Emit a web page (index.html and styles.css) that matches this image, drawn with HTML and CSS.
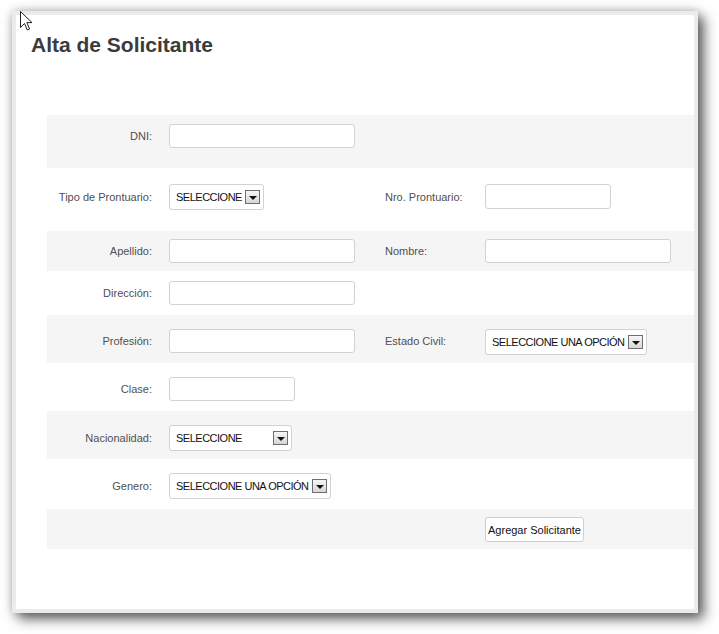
FILE: index.html
```html
<!DOCTYPE html>
<html lang="es">
<head>
<meta charset="utf-8">
<title>Alta de Solicitante</title>
<link rel="stylesheet" href="styles.css">
</head>
<body>
<div class="window">
  <h1 class="title">Alta de Solicitante</h1>
  <form class="form">
    <div class="row alt first">
      <label class="lbl">DNI:</label>
      <div class="field"><input class="inp w-lg" type="text"></div>
    </div>
    <div class="row tall">
      <label class="lbl sel-h">Tipo de Prontuario:</label>
      <div class="field"><div class="select w-95"><span class="sel-text">SELECCIONE</span><span class="arrow"></span></div></div>
      <label class="lbl2 sel-h">Nro. Prontuario:</label>
      <div class="field"><input class="inp w-sm h25" type="text"></div>
    </div>
    <div class="row alt short">
      <label class="lbl">Apellido:</label>
      <div class="field"><input class="inp w-lg" type="text"></div>
      <label class="lbl2">Nombre:</label>
      <div class="field"><input class="inp w-lg" type="text"></div>
    </div>
    <div class="row mid">
      <label class="lbl">Dirección:</label>
      <div class="field"><input class="inp w-lg" type="text"></div>
    </div>
    <div class="row alt">
      <label class="lbl">Profesión:</label>
      <div class="field"><input class="inp w-lg" type="text"></div>
      <label class="lbl2">Estado Civil:</label>
      <div class="field"><div class="select w-162"><span class="sel-text">SELECCIONE UNA OPCIÓN</span><span class="arrow"></span></div></div>
    </div>
    <div class="row">
      <label class="lbl">Clase:</label>
      <div class="field"><input class="inp w-sm" type="text"></div>
    </div>
    <div class="row alt">
      <label class="lbl sel-h">Nacionalidad:</label>
      <div class="field"><div class="select w-123"><span class="sel-text">SELECCIONE</span><span class="arrow"></span></div></div>
    </div>
    <div class="row wide">
      <label class="lbl sel-h">Genero:</label>
      <div class="field"><div class="select w-162"><span class="sel-text">SELECCIONE UNA OPCIÓN</span><span class="arrow"></span></div></div>
    </div>
    <div class="row alt short">
      <span class="lbl"></span>
      <span class="field"></span>
      <span class="lbl2"></span>
      <div class="field"><button class="btn" type="button">Agregar Solicitante</button></div>
    </div>
  </form>
</div>
<svg class="cursor" width="13" height="21" viewBox="0 0 13 21" aria-hidden="true">
  <path d="M0.5 0.5 L0.5 16.5 L4.5 12.5 L7.3 19 L9.6 18 L6.9 11.6 L12 11.6 Z" fill="#fff" stroke="#222" stroke-width="1" stroke-linejoin="miter"/>
</svg>
</body>
</html>
```

FILE: styles.css
```css
html, body {
  margin: 0;
  padding: 0;
  background: #ffffff;
}

body {
  position: relative;
  width: 719px;
  height: 634px;
  overflow: hidden;
  font-family: "Liberation Sans", Arial, sans-serif;
}

.window {
  box-sizing: border-box;
  margin: 11px 0 0 12px;
  width: 686px;
  height: 602px;
  background: #ffffff;
  border: 4px solid #ebebeb;
  box-shadow: 6px 6px 12px rgba(0, 0, 0, 0.6), 0 0 10px rgba(0, 0, 0, 0.22);
  padding: 18px 0 0 15px;
}

.title {
  margin: 0;
  font-size: 21px;
  line-height: 24px;
  font-weight: bold;
  color: #3b3b3b;
}

.form {
  margin: 58px 0 0 16px;
}

.row {
  box-sizing: border-box;
  display: grid;
  grid-template-columns: 122px 216px 100px 1fr;
  align-items: start;
  height: 48px;
  padding-top: 14px;
}

.row.alt { background: #f5f5f5; }
.row.first { height: 53px; padding-top: 9px; }
.row.tall { height: 63px; padding-top: 16px; }
.row.short { height: 40px; padding-top: 8px; }
.row.mid { height: 44px; padding-top: 10px; }
.row.wide { height: 50px; }

.lbl, .lbl2 {
  font-size: 11px;
  line-height: 24px;
  color: #505050;
}

.lbl {
  text-align: right;
  padding-right: 17px;
}

.lbl2 {
  text-align: left;
}

.sel-h { line-height: 26px; }

.field {
  display: flex;
}

.inp {
  box-sizing: border-box;
  height: 24px;
  margin: 0;
  padding: 0 4px;
  border: 1px solid #d2d2d2;
  border-radius: 3px;
  background: #ffffff;
  font-family: "Liberation Sans", Arial, sans-serif;
  font-size: 11px;
}

.h25 { height: 25px; }
.w-lg { width: 186px; }
.w-sm { width: 126px; }

.select {
  box-sizing: border-box;
  height: 26px;
  display: flex;
  align-items: center;
  justify-content: space-between;
  padding: 0 3px 0 6px;
  border: 1px solid #d2d2d2;
  border-radius: 3px;
  background: #ffffff;
}

.w-95 { width: 95px; }
.w-123 { width: 123px; }
.w-162 { width: 162px; }

.sel-text {
  font-size: 11px;
  letter-spacing: -0.5px;
  color: #111111;
  white-space: nowrap;
}

.arrow {
  box-sizing: border-box;
  flex: none;
  width: 15px;
  height: 14px;
  border: 1px solid #6e6e6e;
  background: linear-gradient(#f6f6f6, #d6d6d6);
  display: flex;
  align-items: center;
  justify-content: center;
  padding-top: 2px;
}

.arrow::after {
  content: "";
  width: 0;
  height: 0;
  border-left: 4px solid transparent;
  border-right: 4px solid transparent;
  border-top: 4px solid #111111;
}

.btn {
  box-sizing: border-box;
  width: 99px;
  height: 25px;
  margin: 0;
  padding: 0;
  border: 1px solid #cfcfcf;
  border-radius: 3px;
  background: #ffffff;
  font-family: "Liberation Sans", Arial, sans-serif;
  font-size: 11px;
  color: #111111;
  white-space: nowrap;
}

.cursor {
  position: absolute;
  left: 20px;
  top: 11px;
}
```
